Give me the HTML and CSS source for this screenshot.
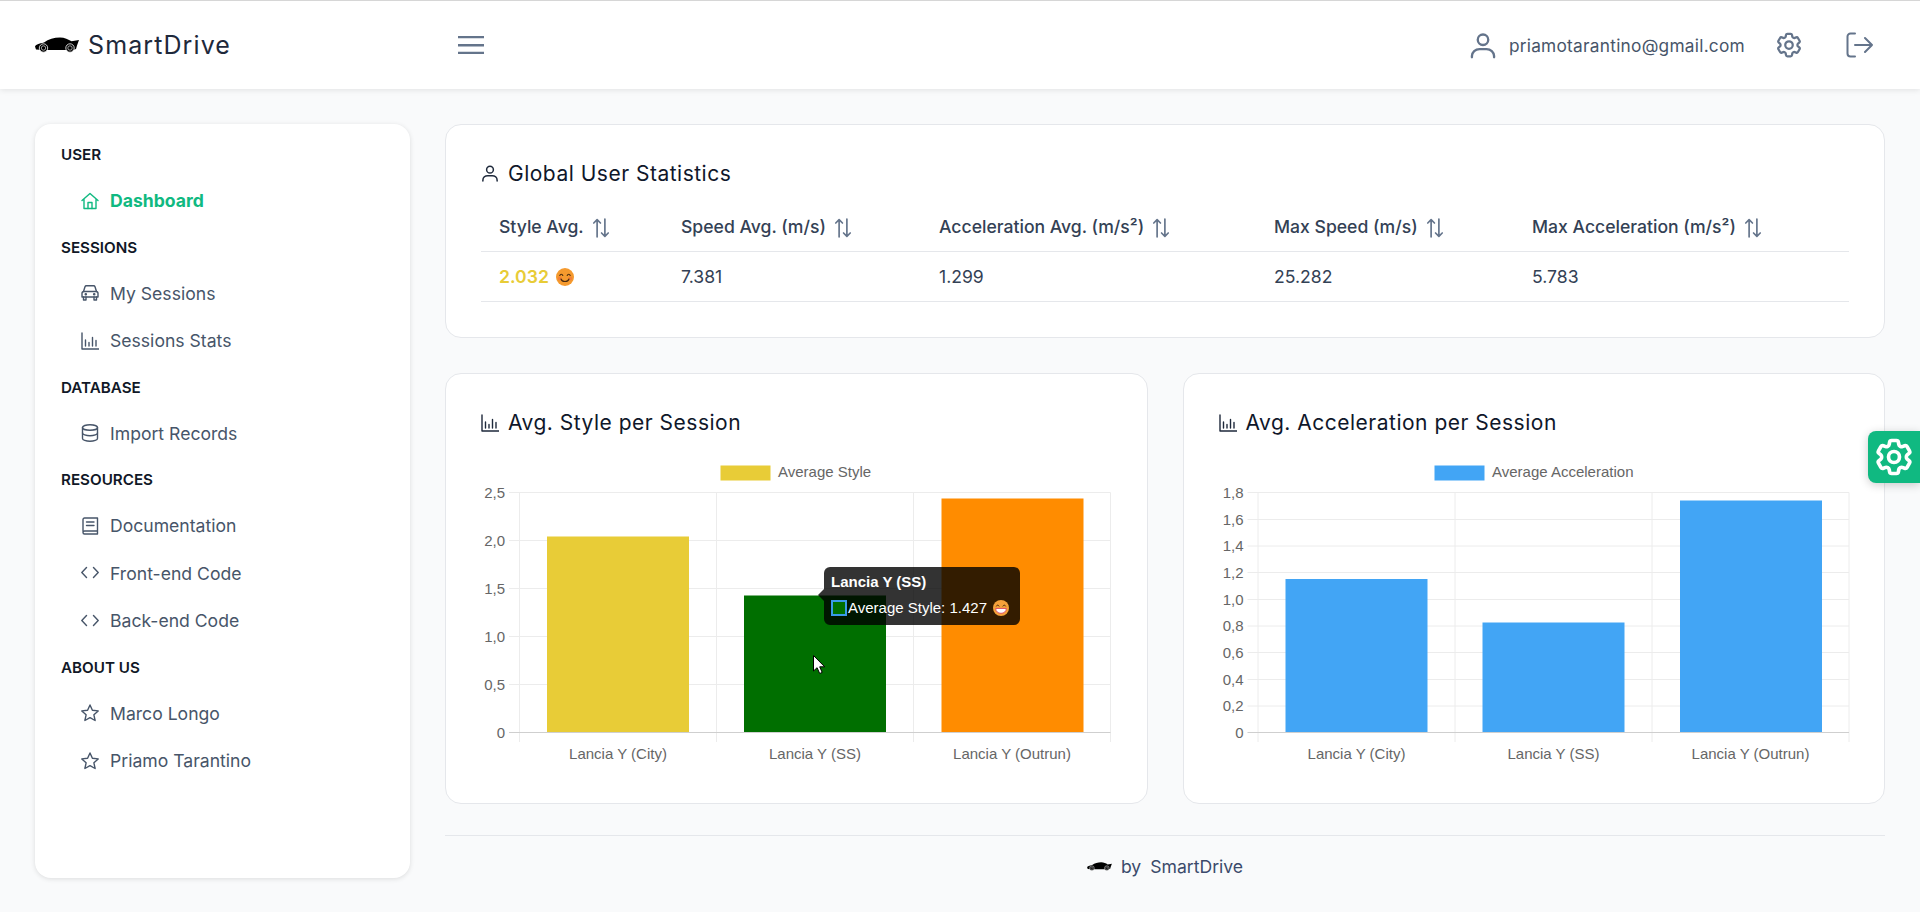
FILE: index.html
```html
<!DOCTYPE html>
<html lang="en">

<head>
    <meta charset="UTF-8">
    <meta name="viewport" content="width=device-width, initial-scale=1.0">
    <title>SmartDrive</title>
    <link rel="stylesheet" href="styles.css">
</head>

<body>
    <!-- icon sprite -->
    <svg class="sprite" xmlns="http://www.w3.org/2000/svg">
        <symbol id="i-car-logo" viewBox="0 0 44 16">
            <path d="M0 9.500C.5 7.500 4 6.600 9 5.400 13.500 2.600 19 .6 25 .6c4.500 0 8.500 2 11.500 3.700L44 3l-2 5.500-1 3.500-3 1H8L1 12.500z" fill="#000" />
            <circle cx="8.500" cy="11" r="4.200" fill="#000" stroke="#fff" stroke-width=".8" />
            <circle cx="8.500" cy="11" r="2.200" fill="#000" stroke="#fff" stroke-width=".6" />
            <circle cx="35" cy="11" r="4.200" fill="#000" stroke="#fff" stroke-width=".8" />
            <circle cx="35" cy="11" r="2.200" fill="#000" stroke="#fff" stroke-width=".6" />
        </symbol>
        <symbol id="i-user" viewBox="0 0 24 24">
            <circle cx="12" cy="7.500" r="4.500" />
            <path d="M2.500 22.500v-1c0-3.500 3-6 6.500-6h6c3.500 0 6.500 2.500 6.500 6v1" />
        </symbol>
        <symbol id="i-gear" viewBox="0 0 24 24">
            <path d="M9.594 3.94c.09-.542.56-.94 1.110-.94h2.593c.55 0 1.020.398 1.110.94l.213 1.281c.063.374.313.686.645.87.074.04.147.083.22.127.325.196.72.257 1.075.124l1.217-.456a1.125 1.125 0 0 1 1.370.49l1.296 2.247a1.125 1.125 0 0 1-.26 1.431l-1.003.827c-.293.241-.438.613-.43.992a7.723 7.723 0 0 1 0 .255c-.008.378.137.75.43.991l1.004.827c.424.35.534.955.26 1.430l-1.298 2.247a1.125 1.125 0 0 1-1.369.491l-1.217-.456c-.355-.133-.75-.072-1.076.124a6.470 6.470 0 0 1-.22.128c-.331.183-.581.495-.644.869l-.213 1.281c-.09.543-.56.94-1.110.94h-2.594c-.55 0-1.019-.398-1.110-.94l-.213-1.281c-.062-.374-.312-.686-.644-.87a6.520 6.520 0 0 1-.22-.127c-.325-.196-.72-.257-1.076-.124l-1.217.456a1.125 1.125 0 0 1-1.369-.49l-1.297-2.247a1.125 1.125 0 0 1 .26-1.431l1.004-.827c.292-.24.437-.613.43-.991a6.932 6.932 0 0 1 0-.255c.007-.38-.138-.751-.43-.992l-1.004-.827a1.125 1.125 0 0 1-.26-1.430l1.297-2.247a1.125 1.125 0 0 1 1.370-.491l1.216.456c.356.133.751.072 1.076-.124.072-.044.146-.086.22-.128.332-.183.582-.495.644-.869l.214-1.280Z" />
            <circle cx="12" cy="12" r="3" />
        </symbol>
        <symbol id="i-logout" viewBox="0 0 27 26">
            <path d="M9 1.500H4.500a3 3 0 0 0-3 3v17a3 3 0 0 0 3 3H9" />
            <path d="M9 13h17M19 6l7 7-7 7" />
        </symbol>
        <symbol id="i-home" viewBox="0 0 18 18">
            <path d="M1 8.500 9 1.500l8 7M3 7v9.500h12V7" />
            <path d="M7 16.500V10.500h4v6" />
        </symbol>
        <symbol id="i-car" viewBox="0 0 18 18">
            <path d="M2.500 7.500 4 2.800c.2-.6.7-1 1.400-1h7.200c.7 0 1.200.4 1.400 1l1.500 4.700" />
            <path d="M1 9.500c0-1.100.9-2 2-2h12c1.100 0 2 .9 2 2V13H1z" />
            <path d="M2.500 13v3h2.500v-3M13 13v3h2.500v-3" />
            <circle cx="4.800" cy="10.300" r=".6" />
            <circle cx="13.200" cy="10.300" r=".6" />
        </symbol>
        <symbol id="i-chart" viewBox="0 0 18 18">
            <path d="M1 1v16h17" />
            <path d="M4.500 8v6M8 10.500V14M11.500 5.500V14M15 8.500V14" />
        </symbol>
        <symbol id="i-database" viewBox="0 0 18 18">
            <ellipse cx="9" cy="3.500" rx="7.500" ry="2.800" />
            <path d="M1.500 3.500v11c0 1.500 3.400 2.800 7.500 2.800s7.500-1.300 7.500-2.800v-11" />
            <path d="M1.500 9c0 1.500 3.400 2.800 7.500 2.800S16.500 10.500 16.500 9" />
        </symbol>
        <symbol id="i-book" viewBox="0 0 18 18">
            <path d="M2 14.500V2.500c0-.8.7-1.500 1.500-1.500h13v13H3.500C2.700 14 2 14.700 2 15.500S2.700 17 3.500 17h13v-3" />
            <path d="M5.500 5h7.500M5.500 8.500h7.500" />
        </symbol>
        <symbol id="i-code" viewBox="0 0 18 18">
            <path d="M5.500 3.500 .8 8.500l4.700 5M12.500 3.500l4.700 5-4.700 5" />
        </symbol>
        <symbol id="i-star" viewBox="0 0 18 18">
            <path d="m9 1 2.400 5.300 5.800.6-4.300 3.900 1.200 5.700L9 13.600l-5.100 2.900 1.200-5.700L.8 6.900l5.800-.6z" />
        </symbol>
        <symbol id="i-sort" viewBox="0 0 18 18">
            <path d="M5.500 17V1.500M2.500 4.500l3-3 3 3" />
            <path d="M12.500 1v15.500M9.500 13.500l3 3 3-3" />
        </symbol>
        <symbol id="i-smile" viewBox="0 0 18 18">
            <circle cx="9" cy="9" r="9" fill="#f59a2e" />
            <circle cx="3.800" cy="10.400" r="2" fill="#f2703f" opacity=".6" />
            <circle cx="14.200" cy="10.400" r="2" fill="#f2703f" opacity=".6" />
            <path d="M3.800 7.500c.6-1.600 2.400-1.600 3 0M11.200 7.500c.6-1.600 2.400-1.600 3 0M5 11c1 3.400 7 3.400 8 0" fill="none" stroke="#4a2c10" stroke-width="1.100" stroke-linecap="round" />
        </symbol>
        <symbol id="i-grin" viewBox="0 0 18 18">
            <circle cx="9" cy="9" r="9" fill="#f5a13a" />
            <path d="M3.800 6.800c.6-1.500 2.400-1.500 3 0M11.200 6.800c.6-1.500 2.400-1.500 3 0" fill="none" stroke="#4a2c10" stroke-width="1.100" stroke-linecap="round" />
            <path d="M3 9.500h12c0 3.500-2.800 5.500-6 5.500s-6-2-6-5.500z" fill="#fff" stroke="#d9415f" stroke-width="1" />
        </symbol>
    </svg>

    <header class="top-bar">
        <div class="brand">
            <svg class="brand-car"><use href="#i-car-logo" /></svg>
            <span class="brand-name">SmartDrive</span>
        </div>
        <svg class="menu-icon" viewBox="0 0 26 18"><path d="M0 1h26M0 9.300h26M0 17h26" /></svg>
        <div class="user-box">
            <svg class="icon user-icon"><use href="#i-user" /></svg>
            <span class="user-mail">priamotarantino@gmail.com</span>
            <svg class="icon gear-icon"><use href="#i-gear" /></svg>
            <svg class="icon logout-icon"><use href="#i-logout" /></svg>
        </div>
    </header>

    <div class="page">
        <nav class="sidebar">
            <h3 class="nav-title">USER</h3>
            <a class="nav-item active"><svg class="icon"><use href="#i-home" /></svg>Dashboard</a>
            <h3 class="nav-title">SESSIONS</h3>
            <a class="nav-item"><svg class="icon"><use href="#i-car" /></svg>My Sessions</a>
            <a class="nav-item"><svg class="icon"><use href="#i-chart" /></svg>Sessions Stats</a>
            <h3 class="nav-title">DATABASE</h3>
            <a class="nav-item"><svg class="icon"><use href="#i-database" /></svg>Import Records</a>
            <h3 class="nav-title">RESOURCES</h3>
            <a class="nav-item"><svg class="icon"><use href="#i-book" /></svg>Documentation</a>
            <a class="nav-item"><svg class="icon"><use href="#i-code" /></svg>Front-end Code</a>
            <a class="nav-item"><svg class="icon"><use href="#i-code" /></svg>Back-end Code</a>
            <h3 class="nav-title">ABOUT US</h3>
            <a class="nav-item"><svg class="icon"><use href="#i-star" /></svg>Marco Longo</a>
            <a class="nav-item"><svg class="icon"><use href="#i-star" /></svg>Priamo Tarantino</a>
        </nav>

        <main class="content">
            <section class="card stats-card">
                <h2 class="card-title"><svg class="icon title-icon user-title"><use href="#i-user" /></svg>Global User Statistics</h2>
                <table class="stats-table">
                    <thead>
                        <tr>
                            <th class="col-style">Style Avg.<svg class="icon sort-icon"><use href="#i-sort" /></svg></th>
                            <th class="col-speed">Speed Avg. (m/s)<svg class="icon sort-icon"><use href="#i-sort" /></svg></th>
                            <th class="col-accel">Acceleration Avg. (m/s²)<svg class="icon sort-icon"><use href="#i-sort" /></svg></th>
                            <th class="col-speed">Max Speed (m/s)<svg class="icon sort-icon"><use href="#i-sort" /></svg></th>
                            <th>Max Acceleration (m/s²)<svg class="icon sort-icon"><use href="#i-sort" /></svg></th>
                        </tr>
                    </thead>
                    <tbody>
                        <tr>
                            <td><span class="style-value">2.032</span><svg class="emoji"><use href="#i-smile" /></svg></td>
                            <td>7.381</td>
                            <td>1.299</td>
                            <td>25.282</td>
                            <td>5.783</td>
                        </tr>
                    </tbody>
                </table>
            </section>

            <div class="chart-row">
                <section class="card chart-card">
                    <h2 class="card-title"><svg class="icon title-icon"><use href="#i-chart" /></svg>Avg. Style per Session</h2>
                    <div class="chart-wrap">
                        <svg class="chart" viewBox="481 456 631 310">
                            <rect class="legend-box yellow" x="720.500" y="465.500" width="50" height="15" />
                            <text class="chart-text" x="778" y="473">Average Style</text>
                            <!-- grid -->
                            <path class="grid" d="M509 492.500H1110.500M509 540.500H1110.500M509 588.500H1110.500M509 636.500H1110.500M509 684.500H1110.500" />
                            <path class="grid" d="M519.500 492.500V742M716.500 492.500V742M913.500 492.500V742M1110.500 492.500V742" />
                            <path class="grid-zero" d="M509 732.500H1110.500" />
                            <!-- bars -->
                            <rect class="bar yellow" x="547" y="536.500" width="142" height="195.500" />
                            <rect class="bar green" x="744" y="595.500" width="142" height="136.500" />
                            <rect class="bar orange" x="941.500" y="498.500" width="142" height="233.500" />
                            <!-- labels -->
                            <g class="chart-text axis-y">
                                <text x="505" y="494">2,5</text>
                                <text x="505" y="542">2,0</text>
                                <text x="505" y="590">1,5</text>
                                <text x="505" y="638">1,0</text>
                                <text x="505" y="686">0,5</text>
                                <text x="505" y="734">0</text>
                            </g>
                            <g class="chart-text axis-x">
                                <text x="618" y="755">Lancia Y (City)</text>
                                <text x="815" y="755">Lancia Y (SS)</text>
                                <text x="1012" y="755">Lancia Y (Outrun)</text>
                            </g>
                        </svg>
                        <div class="tooltip">
                            <div class="tooltip-title">Lancia Y (SS)</div>
                            <div class="tooltip-line"><span class="tooltip-box"></span>Average Style: 1.427<svg class="emoji-small"><use href="#i-grin" /></svg></div>
                        </div>
                        <svg class="cursor" viewBox="0 0 12 19"><path d="M.5.500v15.500l3.600-3.300 2.600 5.800 2.500-1.100-2.500-5.600h5z" /></svg>
                    </div>
                </section>

                <section class="card chart-card">
                    <h2 class="card-title"><svg class="icon title-icon"><use href="#i-chart" /></svg>Avg. Acceleration per Session</h2>
                    <div class="chart-wrap">
                        <svg class="chart" viewBox="1218.500 456 631 310">
                            <rect class="legend-box blue" x="1434" y="465.500" width="50" height="15" />
                            <text class="chart-text" x="1491.500" y="473">Average Acceleration</text>
                            <path class="grid" d="M1247 492.500H1848.500M1247 519.500H1848.500M1247 546H1848.500M1247 572.500H1848.500M1247 599.500H1848.500M1247 626H1848.500M1247 652.500H1848.500M1247 679.500H1848.500M1247 706H1848.500" />
                            <path class="grid" d="M1257.500 492.500V742M1454.500 492.500V742M1651.500 492.500V742M1848.500 492.500V742" />
                            <path class="grid-zero" d="M1247 732.500H1848.500" />
                            <rect class="bar blue" x="1285" y="579" width="142" height="153" />
                            <rect class="bar blue" x="1482" y="622.500" width="142" height="109.500" />
                            <rect class="bar blue" x="1679.500" y="500.500" width="142" height="231.500" />
                            <g class="chart-text axis-y">
                                <text x="1243" y="494">1,8</text>
                                <text x="1243" y="521">1,6</text>
                                <text x="1243" y="547">1,4</text>
                                <text x="1243" y="574">1,2</text>
                                <text x="1243" y="601">1,0</text>
                                <text x="1243" y="627">0,8</text>
                                <text x="1243" y="654">0,6</text>
                                <text x="1243" y="681">0,4</text>
                                <text x="1243" y="707">0,2</text>
                                <text x="1243" y="734">0</text>
                            </g>
                            <g class="chart-text axis-x">
                                <text x="1356" y="755">Lancia Y (City)</text>
                                <text x="1553" y="755">Lancia Y (SS)</text>
                                <text x="1750" y="755">Lancia Y (Outrun)</text>
                            </g>
                        </svg>
                    </div>
                </section>
            </div>

            <footer class="page-footer">
                <svg class="footer-car"><use href="#i-car-logo" /></svg>
                <span>by</span>
                <span class="footer-name">SmartDrive</span>
            </footer>
        </main>
    </div>

    <!-- floating settings button -->
    <div class="settings-tab">
        <svg class="icon"><use href="#i-gear" /></svg>
    </div>
</body>

</html>
```

FILE: styles.css
```css
/* SmartDrive dashboard */
* {
    box-sizing: border-box;
}

body {
    margin: 0;
    background-color: #f9fafb;
    color: #1e293b;
    font-family: "Inter", "Liberation Sans", sans-serif;
    overflow: hidden;
}

.sprite {
    display: none;
}

.icon {
    fill: none;
    stroke: currentColor;
    stroke-width: 1.4;
    stroke-linecap: round;
    stroke-linejoin: round;
    flex: none;
}

/* top bar */
.top-bar {
    position: relative;
    display: flex;
    align-items: center;
    height: 89px;
    padding: 0 35px;
    background-color: white;
    border-top: 1px solid #d6d6d6;
    box-shadow: 0 1px 6px rgba(0, 0, 0, 0.1);
}

.brand {
    display: flex;
    align-items: center;
    width: 423px;
}

.brand-car {
    width: 44px;
    height: 16px;
    margin-right: 9px;
}

.brand-name {
    font-size: 25px;
    letter-spacing: 1.1px;
    color: #1e293b;
}

.menu-icon {
    width: 26px;
    height: 18px;
    fill: none;
    stroke: #64748b;
    stroke-width: 2.4;
}

.user-box {
    display: flex;
    align-items: center;
    margin-left: auto;
    color: #64748b;
    margin-right: 12px;
}

.user-icon {
    width: 28px;
    height: 28px;
    stroke-width: 2;
    margin-right: 12px;
}

.user-mail {
    font-size: 17.3px;
    letter-spacing: 0.25px;
    color: #475569;
    margin-right: 29px;
}

.gear-icon {
    width: 30px;
    height: 30px;
    stroke-width: 1.8;
    margin-right: 42px;
}

.logout-icon {
    width: 27px;
    height: 26px;
    stroke-width: 2;
}

/* layout */
.page {
    display: flex;
    padding: 35px 35px 0;
}

.sidebar {
    flex: none;
    width: 375px;
    height: 754px;
    margin-right: 35px;
    padding: 8px 26px 0;
    background-color: white;
    border-radius: 16px;
    box-shadow: 0 1px 5px rgba(0, 0, 0, 0.12);
}

.nav-title {
    margin: 0;
    height: 45px;
    line-height: 45px;
    font-size: 15.2px;
    font-weight: 600;
    color: #111827;
}

.nav-item {
    display: flex;
    align-items: center;
    gap: 11px;
    height: 47.5px;
    padding-left: 20px;
    font-size: 17.6px;
    color: #475569;
}

.nav-item .icon {
    width: 18px;
    height: 18px;
}

.nav-item.active {
    color: #10b981;
    font-weight: 700;
}

.content {
    flex: 1;
    min-width: 0;
}

/* cards */
.card {
    padding: 34px 35px 35px;
    background-color: white;
    border: 1px solid #e5e7eb;
    border-radius: 16px;
}

.card-title {
    display: flex;
    align-items: center;
    gap: 9px;
    margin: 0;
    height: 28px;
    font-size: 21px;
    font-weight: 400;
    color: #0f172a;
    letter-spacing: 0.5px;
}

.title-icon {
    width: 18px;
    height: 18px;
    color: #1e293b;
}

.user-title {
    stroke-width: 2;
}

/* statistics table */
.stats-table {
    width: 100%;
    margin-top: 14px;
    border-collapse: collapse;
    table-layout: fixed;
}

.stats-table th,
.stats-table td {
    height: 50px;
    padding: 0 0 0 18px;
    text-align: left;
    border-bottom: 1px solid #e5e7eb;
    white-space: nowrap;
}

.stats-table th {
    padding-top: 2px;
    font-size: 17.6px;
    font-weight: 500;
    color: #334155;
}

.stats-table td {
    font-size: 17.6px;
    color: #334155;
}

.col-style {
    width: 182px;
}

.col-speed {
    width: 258px;
}

.col-accel {
    width: 335px;
}

.sort-icon {
    width: 20px;
    height: 20px;
    margin-left: 7px;
    vertical-align: -5px;
    color: #64748b;
    stroke-width: 1.5;
}

.style-value {
    font-weight: 600;
    color: #e8cc37;
}

.emoji {
    width: 18px;
    height: 18px;
    margin-left: 7px;
    vertical-align: -3px;
}

/* charts */
.chart-row {
    display: grid;
    grid-template-columns: minmax(0, 1fr) minmax(0, 1fr);
    gap: 35px;
    margin-top: 35px;
}

.chart-card {
    height: 431px;
    padding-top: 35px;
}

.chart-wrap {
    position: relative;
    margin-top: 19px;
}

.chart {
    display: block;
    width: 631px;
    height: 310px;
}

.chart-text {
    font-family: "Liberation Sans", sans-serif;
    font-size: 15px;
    fill: #666666;
    dominant-baseline: middle;
}

.axis-y {
    text-anchor: end;
}

.axis-x {
    text-anchor: middle;
}

.grid {
    fill: none;
    stroke: #ececec;
    stroke-width: 1;
}

.grid-zero {
    fill: none;
    stroke: #cfcfcf;
    stroke-width: 1;
}

.yellow {
    fill: #e8cc37;
}

.green {
    fill: #006f00;
}

.orange {
    fill: #ff8c00;
}

.blue {
    fill: #42a5f5;
}

.tooltip {
    position: absolute;
    left: 343px;
    top: 111px;
    width: 196px;
    height: 58px;
    padding: 6px 7px;
    background-color: rgba(0, 0, 0, 0.8);
    border-radius: 6px;
    color: white;
    font-family: "Liberation Sans", sans-serif;
    font-size: 15px;
}

/* little arrow on the left of the tooltip */
.tooltip::before {
    content: "";
    position: absolute;
    left: -6px;
    top: 22px;
    border-style: solid;
    border-width: 6px 6px 6px 0;
    border-color: transparent rgba(0, 0, 0, 0.8) transparent transparent;
}

.tooltip-title {
    height: 18px;
    line-height: 18px;
    font-weight: bold;
}

.tooltip-line {
    display: flex;
    align-items: center;
    height: 18px;
    margin-top: 8px;
}

.tooltip-box {
    width: 16px;
    height: 16px;
    margin-right: 1px;
    background-color: #006f00;
    border: 2px solid #3a9ae8;
}

.emoji-small {
    width: 16px;
    height: 16px;
    margin-left: 6px;
}

.cursor {
    position: absolute;
    left: 332px;
    top: 199px;
    width: 12px;
    height: 19px;
    fill: white;
    stroke: black;
    stroke-width: 1;
}

/* footer */
.page-footer {
    display: flex;
    align-items: center;
    justify-content: center;
    height: 62px;
    margin-top: 31px;
    border-top: 1px solid #e5e7eb;
    font-size: 17.6px;
    color: #3b4a6b;
}

.footer-car {
    width: 25px;
    height: 9px;
    margin-right: 9px;
}

.footer-name {
    margin-left: 9px;
}

/* floating settings tab */
.settings-tab {
    position: fixed;
    right: 0;
    top: 431px;
    display: flex;
    align-items: center;
    justify-content: center;
    width: 52px;
    height: 52px;
    background-color: #10b981;
    border-radius: 8px 0 0 8px;
    color: white;
    box-shadow: 0 2px 10px rgba(0, 0, 0, 0.2);
}

.settings-tab .icon {
    width: 44px;
    height: 44px;
    stroke-width: 2;
}
```
